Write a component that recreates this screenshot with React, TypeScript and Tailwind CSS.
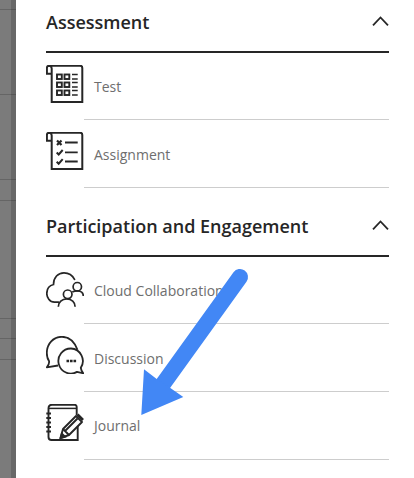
import React from "react";

const INK = "#262626";

// sheet with a curled corner, shared by Test and Assignment
function Scroll({ children }: { children: React.ReactNode }) {
  return (
    <svg width="38" height="38" viewBox="0 0 38 38" fill="none" stroke={INK} strokeWidth="2">
      <path d="M5.7 4v33H36.3V3a2.300 2.300 0 0 0-2.300-2.300H3A2.300 2.300 0 0 0 .9 3v5.800H5.700V3.500A2.800 2.800 0 0 0 3 .7" />
      {children}
    </svg>
  );
}

function TestIcon() {
  return (
    <Scroll>
      {[9.5, 17.5, 25.5].map((y) => (
        <g key={y}>
          <rect x="11" y={y} width="4.800" height="4.500" strokeWidth="1.900" />
          <rect x="18.500" y={y} width="4.800" height="4.500" strokeWidth="1.900" />
          <path d={`M26 ${y}H31.700M26 ${y + 4.5}H31.700`} strokeWidth="1.500" />
        </g>
      ))}
    </Scroll>
  );
}

function AssignmentIcon() {
  return (
    <Scroll>
      <path d="M11 8.500l4.500 4.500M15.500 8.500L11 13" strokeWidth="2.200" />
      <path d="M19 10.500H31.700M19 20.300H31.700M19 29.500H31.700" strokeWidth="1.800" />
      <path d="M10.700 20.500l2 2 4-4.500M10.700 29.700l2 2 4-4.500" strokeWidth="2" />
    </Scroll>
  );
}

function CloudIcon() {
  return (
    <svg width="38" height="38" viewBox="0 0 38 38" fill="none" stroke={INK} strokeWidth="1.700">
      <path d="M12.500 33.200H8.500C3.500 33.200 .8 28.500 .8 24.500.8 20 3.500 16.500 7.500 15.500 7.500 8.500 12 3.800 18 3.800c4.500 0 8.500 2.500 10.500 6.500" strokeLinecap="round" />
      <circle cx="31.300" cy="17.700" r="4.200" />
      <path d="M26.300 23c1.500-.8 3.200-1.200 5-1.200 3.500 0 6 2 6 5.200" />
      <circle cx="21.700" cy="25.300" r="4.300" />
      <path d="M12.300 37.700c0-4.500 3.700-7.700 8.500-7.700s8.300 3.200 8.300 7.700" />
    </svg>
  );
}

function DiscussionIcon() {
  return (
    <svg width="38" height="38" viewBox="0 0 38 38" fill="none" stroke={INK} strokeWidth="1.800">
      <path d="M12 29.500 .8 31.300c1.700-1.800 2.500-3.700 2.300-6C1.500 22.800.8 20 .8 17 .8 7.500 7.500.8 16 .8c6.500 0 12 3.700 15.500 13" strokeLinejoin="round" />
      <path d="M25 12.500a12.500 12.500 0 1 0 6 23.400l6.300 1.400c-1.500-1.800-2.300-3.500-2.500-5.500A12.500 12.500 0 0 0 25 12.500z" fill="#fff" strokeLinejoin="round" />
      <path d="M20.500 25h2.600M24 25h2.600M27.500 25h2.600" strokeWidth="2.600" />
    </svg>
  );
}

function JournalIcon() {
  return (
    <svg width="38" height="38" viewBox="0 0 38 38" fill="none" stroke={INK} strokeWidth="1.900">
      <path d="M30.700 11V3c0-1.300-.9-2.200-2.200-2.200H6C3.800.8 2.500 2.200 2.500 4.500V33c0 2 1.300 3 3 3H31.700V17" />
      <path d="M3 4.400H30.700" strokeWidth="1.500" />
      <path d="M.3 9.500H5M.3 14H5M.3 18.500H5M.3 23H5M.3 27.500H5" strokeWidth="1.800" />
      <path d="M14.500 34l2.500-9L30 12l6 6L23 31z" fill="#fff" strokeLinejoin="round" />
      <path d="M14.500 34l4.500-1.300-3.200-3.200z" fill={INK} />
      <path d="M17 25l6 6M19.500 26.500 31.500 14.500" />
      <path d="M31.500 10.500l5.500 5.500" strokeWidth="2.600" />
    </svg>
  );
}

function Chevron() {
  return (
    <svg width="17" height="10" viewBox="0 0 17 10" fill="none" stroke={INK} strokeWidth="1.800" className="-mt-[3px]">
      <path d="M1 9.300l7.500-7.800L16 9.300" />
    </svg>
  );
}

function Row({ icon, label }: { icon: React.ReactNode; label: string }) {
  return (
    <div className="group flex h-[68px] nth-2:h-[67px]">
      <div className="w-[38px] shrink-0 pt-[12px]">{icon}</div>
      <div className="flex flex-1 items-center border-b border-[#cdcdcd] pl-[10px] group-nth-3:pt-[2px]">
        <span className="text-[14px] text-[#6e6e6e]">{label}</span>
      </div>
    </div>
  );
}

function Section({ title, children }: { title: string; children: React.ReactNode }) {
  return (
    <section>
      <div className="flex items-center justify-between border-b-2 border-[#262626] pt-[8px] pb-[15px]">
        <h2 className="text-[18px] leading-[28px] font-semibold text-[#262626]">{title}</h2>
        <Chevron />
      </div>
      {children}
    </section>
  );
}

export default function App() {
  return (
    <div className="relative flex h-[478px] w-[414px] overflow-hidden bg-white font-['Open_Sans',sans-serif]">
      {/* dimmed page behind the panel */}
      <div className="relative w-[16px] shrink-0 bg-[#7b7b7b]">
        <div className="h-[10px] border-b border-[#656565]" />
        <div className="h-[85px] border-b border-[#656565]" />
        <div className="h-[85px] border-b border-[#656565]" />
        <div className="h-[21px] border-b border-[#656565]" />
        <div className="h-[118px] border-b border-[#656565]" />
        <div className="h-[20px] border-b border-[#656565]" />
        <div className="h-[21px] border-b border-[#656565]" />
        <div className="absolute top-0 right-0 bottom-0 w-[5px] bg-black/15" />
      </div>

      <main className="ml-[30px] flex w-[343px] flex-col gap-[16px]">
        <Section title="Assessment">
          <Row icon={<TestIcon />} label="Test" />
          <Row icon={<AssignmentIcon />} label="Assignment" />
        </Section>
        <Section title="Participation and Engagement">
          <Row icon={<CloudIcon />} label="Cloud Collaboration" />
          <Row icon={<DiscussionIcon />} label="Discussion" />
          <Row icon={<JournalIcon />} label="Journal" />
        </Section>
      </main>

      {/* annotation arrow */}
      <svg width="414" height="478" viewBox="0 0 414 478" className="pointer-events-none absolute top-0 left-0">
        <path d="M240 277 163 384" stroke="#4287f5" strokeWidth="16" strokeLinecap="round" />
        <path d="M141.300 415 144 369.300 156.700 379 170.700 388.300 183.300 397z" fill="#4287f5" />
      </svg>
    </div>
  );
}
